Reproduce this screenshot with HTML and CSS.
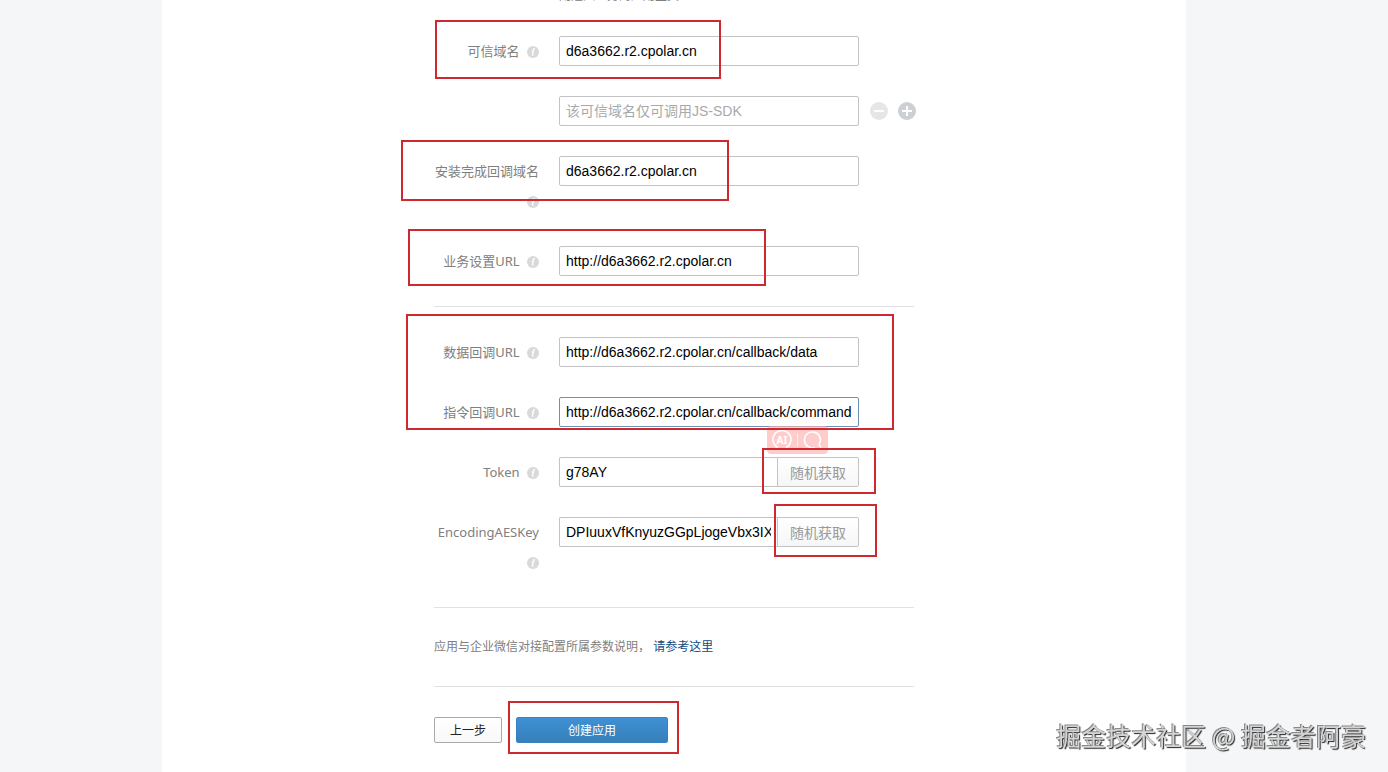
FILE: index.html
```
<!DOCTYPE html>
<html lang="zh-cn">
<head>
    <meta charset="UTF-8">
    <title>创建应用</title>
    <link rel="stylesheet" href="styles.css">
</head>
<body>
    <svg class="sprite" aria-hidden="true">
        <symbol id="icon-info" viewBox="0 0 12 12">
            <circle cx="6" cy="6" r="6" fill="#d9d9d9"/>
            <circle cx="6.9" cy="3" r="1" fill="#fff"/>
            <path d="M4.8 5h1.6l-1 3.600q-.1.700 1 .2" fill="none" stroke="#fff" stroke-width="1.300"/>
        </symbol>
    </svg>

    <main class="page">
        <form class="form" id="appForm">
            <p class="hint">则进入业务的应用主页</p>

            <!-- 域名设置 -->
            <div class="field">
                <label class="label" for="domain">可信域名 <svg class="info"><use href="#icon-info"/></svg></label>
                <input class="input" type="text" id="domain" name="domain" value="d6a3662.r2.cpolar.cn">
            </div>
            <div class="field">
                <span class="label"></span>
                <input class="input" type="text" name="jsdomain" aria-label="JS-SDK 可信域名" placeholder="该可信域名仅可调用JS-SDK">
                <button class="round round-off" type="button" aria-label="删除">
                    <svg viewBox="0 0 18 18"><path d="M4 9h10" stroke="#fff" stroke-width="2"/></svg>
                </button>
                <button class="round" type="button" aria-label="添加">
                    <svg viewBox="0 0 18 18"><path d="M4 9h10M9 4v10" stroke="#fff" stroke-width="2"/></svg>
                </button>
            </div>
            <div class="field">
                <label class="label" for="installDomain">安装完成回调域名 <svg class="info"><use href="#icon-info"/></svg></label>
                <input class="input" type="text" id="installDomain" name="installDomain" value="d6a3662.r2.cpolar.cn">
            </div>
            <div class="field">
                <label class="label" for="settingUrl">业务设置URL <svg class="info"><use href="#icon-info"/></svg></label>
                <input class="input" type="text" id="settingUrl" name="settingUrl" value="http://d6a3662.r2.cpolar.cn">
            </div>

            <hr class="line">

            <!-- 回调配置 -->
            <div class="field">
                <label class="label" for="dataUrl">数据回调URL <svg class="info"><use href="#icon-info"/></svg></label>
                <input class="input" type="text" id="dataUrl" name="dataUrl" value="http://d6a3662.r2.cpolar.cn/callback/data">
            </div>
            <div class="field">
                <label class="label" for="commandUrl">指令回调URL <svg class="info"><use href="#icon-info"/></svg></label>
                <input class="input input-active" type="text" id="commandUrl" name="commandUrl" value="http://d6a3662.r2.cpolar.cn/callback/command">
            </div>
            <div class="field">
                <label class="label" for="token">Token <svg class="info"><use href="#icon-info"/></svg></label>
                <div class="group">
                    <input class="input" type="text" id="token" name="token" value="g78AY">
                    <button class="random" type="button">随机获取</button>
                </div>
            </div>
            <div class="field">
                <label class="label" for="aesKey">EncodingAESKey <svg class="info"><use href="#icon-info"/></svg></label>
                <div class="group">
                    <input class="input" type="text" id="aesKey" name="aesKey" value="DPIuuxVfKnyuzGGpLjogeVbx3IX">
                    <button class="random" type="button">随机获取</button>
                </div>
            </div>

            <hr class="line">
            <p class="note">应用与企业微信对接配置所属参数说明， <a href="#">请参考这里</a></p>
            <hr class="line">

            <div class="actions">
                <button class="btn" type="button">上一步</button>
                <button class="btn btn-primary" type="submit">创建应用</button>
            </div>

            <!-- AI 悬浮工具 -->
            <div class="ai-tool">
                <svg viewBox="0 0 61 28" fill="none" stroke="#fff" stroke-width="1.5">
                    <path d="M11 21.500A9 9 0 1 1 19 21.500"/>
                    <path d="M30.500 7v14" stroke-width="1" stroke-opacity=".7"/>
                    <path d="M48 21.500A8 8 0 1 1 52 18.500l2 3"/>
                </svg>
                <span class="ai-text">AI</span>
            </div>

            <!-- 红框标注 -->
            <div class="mark mark-domain"></div>
            <div class="mark mark-install"></div>
            <div class="mark mark-setting"></div>
            <div class="mark mark-callback"></div>
            <div class="mark mark-token"></div>
            <div class="mark mark-key"></div>
            <div class="mark mark-submit"></div>
        </form>
    </main>

    <div class="watermark">掘金技术社区 @ 掘金者阿豪</div>
</body>
</html>
```

FILE: styles.css
```
* {
    box-sizing: border-box;
}
body {
    margin: 0;
    padding-right: 40px;
    height: 100vh;
    overflow: hidden;
    background-color: #f4f6f8;
    font-family: "Noto Sans", "Noto Sans CJK SC", sans-serif;
    font-size: 13px;
    color: #808080;
}
.sprite {
    position: absolute;
    width: 0;
    height: 0;
}
.page {
    max-width: 1024px;
    min-height: 100vh;
    margin: 0 auto;
    background-color: #fff;
}
.form {
    display: flow-root;
    position: relative;
    max-width: 480px;
    margin: 0 auto;
}
.hint {
    margin: -14px 0 30px;
    padding-left: 125px;
    font-size: 12px;
    line-height: 20px;
}
.field {
    display: flex;
    align-items: flex-start;
    margin-bottom: 30px;
}
.label {
    flex: none;
    width: 105px;
    margin-right: 20px;
    line-height: 30px;
    text-align: right;
}
.info {
    width: 12px;
    height: 12px;
    margin-left: 4px;
    vertical-align: -2px;
}
.input {
    flex: none;
    width: 300px;
    height: 30px;
    padding: 0 6px;
    border: 1px solid #c3c3c6;
    border-radius: 2px;
    background-color: #fff;
    font-family: "Liberation Sans", "Noto Sans CJK SC", sans-serif;
    font-size: 14px;
    color: #000;
}
.input::placeholder {
    color: #a9a9a9;
}
.input-active {
    border-color: #6b93b8;
}
.group {
    display: flex;
    width: 300px;
}
.group .input {
    flex: 1;
    min-width: 0;
    border-right: none;
    border-radius: 2px 0 0 2px;
}
.random {
    width: 82px;
    height: 30px;
    padding: 0;
    border: 1px solid #c3c3c6;
    border-radius: 0 2px 2px 0;
    background: linear-gradient(#fff, #f5f6f7);
    font-family: inherit;
    font-size: 14px;
    color: #999;
}
.round {
    flex: none;
    width: 18px;
    height: 18px;
    margin: 6px 0 0 10px;
    padding: 0;
    border: none;
    border-radius: 50%;
    background-color: #cccfd3;
}
.round-off {
    margin-left: 11px;
    background-color: #e5e6e8;
}
.round svg {
    display: block;
}
.line {
    margin: 0 0 30px;
    border: none;
    border-top: 1px solid #e2e2e4;
}
.note {
    margin: 0 0 30px;
    font-size: 12px;
    line-height: 18px;
}
.note a {
    color: #0f4a80;
    text-decoration: none;
}
.actions {
    display: flex;
    gap: 14px;
}
.btn {
    width: 68px;
    height: 26px;
    padding: 0;
    border: 1px solid #a9a9ac;
    border-radius: 2px;
    background: linear-gradient(#fff, #f8f8f8);
    font-family: inherit;
    font-size: 12px;
    color: #222;
}
.btn-primary {
    width: 152px;
    border-color: #3a83c2;
    background: linear-gradient(#3f91d4, #367fba);
    color: #fff;
}
.ai-tool {
    position: absolute;
    left: 333px;
    top: 426px;
    width: 61px;
    height: 28px;
    border-radius: 4px;
    background-color: rgba(255, 176, 176, 0.65);
}
.ai-tool svg {
    display: block;
}
.ai-text {
    position: absolute;
    left: 0;
    top: 0;
    width: 30px;
    font-size: 10px;
    font-weight: bold;
    line-height: 28px;
    text-align: center;
    color: #fff;
}
.mark {
    position: absolute;
    border: 2px solid #cf282e;
    pointer-events: none;
}
.mark-domain {
    left: 1px;
    top: 20px;
    width: 286px;
    height: 59px;
}
.mark-install {
    left: -33px;
    top: 140px;
    width: 328px;
    height: 61px;
}
.mark-setting {
    left: -26px;
    top: 229px;
    width: 358px;
    height: 57px;
}
.mark-callback {
    left: -28px;
    top: 314px;
    width: 488px;
    height: 116px;
}
.mark-token {
    left: 328px;
    top: 448px;
    width: 114px;
    height: 46px;
}
.mark-key {
    left: 340px;
    top: 504px;
    width: 103px;
    height: 53px;
}
.mark-submit {
    left: 74px;
    top: 701px;
    width: 171px;
    height: 53px;
}
.watermark {
    position: fixed;
    right: 22px;
    bottom: 18px;
    font-family: "Noto Sans CJK SC", sans-serif;
    font-size: 25px;
    line-height: 38px;
    color: #d4d4d4;
    text-shadow: -1px -1px 0 #888, 1px 1px 1px #222;
}
```
